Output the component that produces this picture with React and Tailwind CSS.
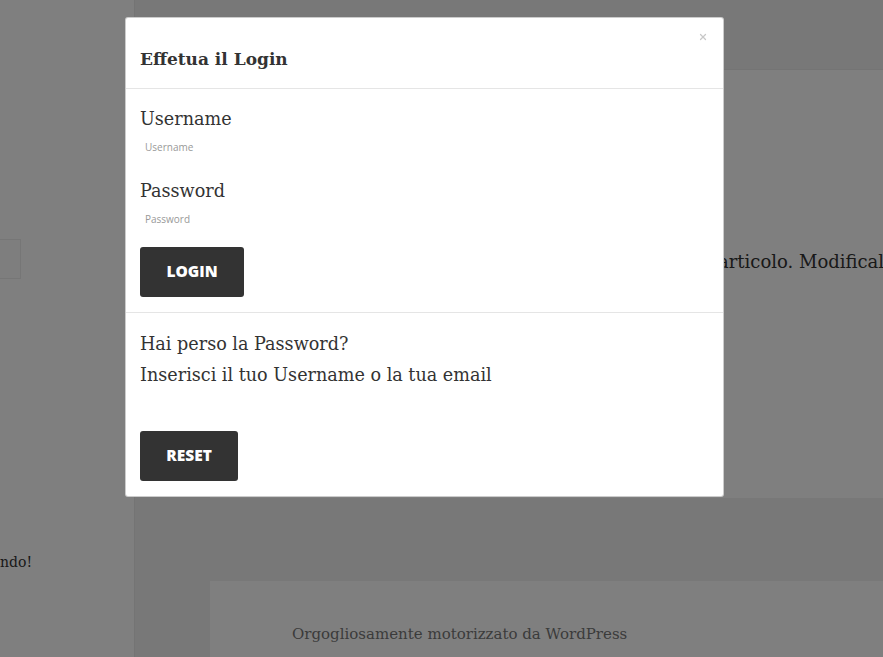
import { X } from 'lucide-react';

const serif = { fontFamily: '"DejaVu Serif", "Liberation Serif", serif' };

const Sidebar = () => (
  <aside className="w-[135px] shrink-0 overflow-hidden bg-white border-r border-[#e8e8e8] relative">
    <div className="h-[239px]" />
    <div className="w-[21px] h-[40px] border border-l-0 border-[#ececec] bg-[#fdfdfd]" />
    <div className="h-[268px]" />
    <p className="text-[14px] leading-[30px] text-[#333] whitespace-nowrap font-['DejaVu_Serif',serif]">ndo!</p>
  </aside>
);

const Main = () => (
  <main className="flex-1 flex flex-col bg-[#f1f1f1] overflow-hidden">
    <div className="h-[69px] shrink-0" />
    <section className="h-[429px] shrink-0 ml-[75px] bg-white border-t border-[#e8e8e8] overflow-hidden">
      <p className="pt-[177px] pl-[508px] text-[18px] leading-[30px] text-[#333] whitespace-nowrap font-['DejaVu_Serif',serif]">
        articolo. Modificalo
      </p>
    </section>
    <div className="h-[83px] shrink-0" />
    <footer className="flex-1 ml-[75px] bg-white overflow-hidden">
      <p className="pt-[38px] pl-[82px] text-[15px] leading-[30px] text-[#777] whitespace-nowrap font-['DejaVu_Serif',serif]">
        Orgogliosamente motorizzato da WordPress
      </p>
    </footer>
  </main>
);

const LoginModal = () => (
  <div className="absolute left-[125px] top-[17px] w-[599px] bg-white border border-black/20 rounded-[3px]">
    <div className="relative px-[14px] pt-[27px] pb-[15px] border-b border-[#e5e5e5]">
      <h3 className="text-[17px] leading-[28px] font-bold text-[#333]" style={serif}>Effetua il Login</h3>
      <button className="absolute top-[14px] right-[15px] text-[#c8c8c8]">
        <X size={10} strokeWidth={3} />
      </button>
    </div>

    <form className="px-[14px] pt-[15px] pb-[15px] border-b border-[#e5e5e5]">
      <label className="block text-[17.6px] leading-[30px] text-[#333]" style={serif}>Username</label>
      <input
        placeholder="Username"
        className="block w-full h-[26px] px-[5px] text-[10px] outline-none placeholder:text-[#999] font-['Open_Sans',sans-serif]"
      />
      <label className="block mt-[16px] text-[17.6px] leading-[30px] text-[#333]" style={serif}>Password</label>
      <input
        type="password"
        placeholder="Password"
        className="block w-full h-[26px] px-[5px] text-[10px] outline-none placeholder:text-[#999] font-['Open_Sans',sans-serif]"
      />
      <button className="mt-[15px] w-[104px] h-[50px] bg-[#333] rounded-[3px] text-white text-[15.5px] font-extrabold font-['Open_Sans',sans-serif]">
        LOGIN
      </button>
    </form>

    <form className="px-[14px] pt-[16px] pb-[15px]">
      <p className="text-[17.6px] leading-[31px] text-[#333]" style={serif}>
        Hai perso la Password?
        <br />
        Inserisci il tuo Username o la tua email
      </p>
      <input className="block w-full h-[40px] outline-none" />
      <button className="w-[98px] h-[50px] bg-[#333] rounded-[3px] text-white text-[15.5px] font-extrabold font-['Open_Sans',sans-serif]">
        RESET
      </button>
    </form>
  </div>
);

export default function App() {
  return (
    <div className="relative w-[883px] h-[657px] overflow-hidden">
      <div className="flex h-full">
        <Sidebar />
        <Main />
      </div>
      <div className="absolute inset-0 bg-black/50" />
      <LoginModal />
    </div>
  );
}
